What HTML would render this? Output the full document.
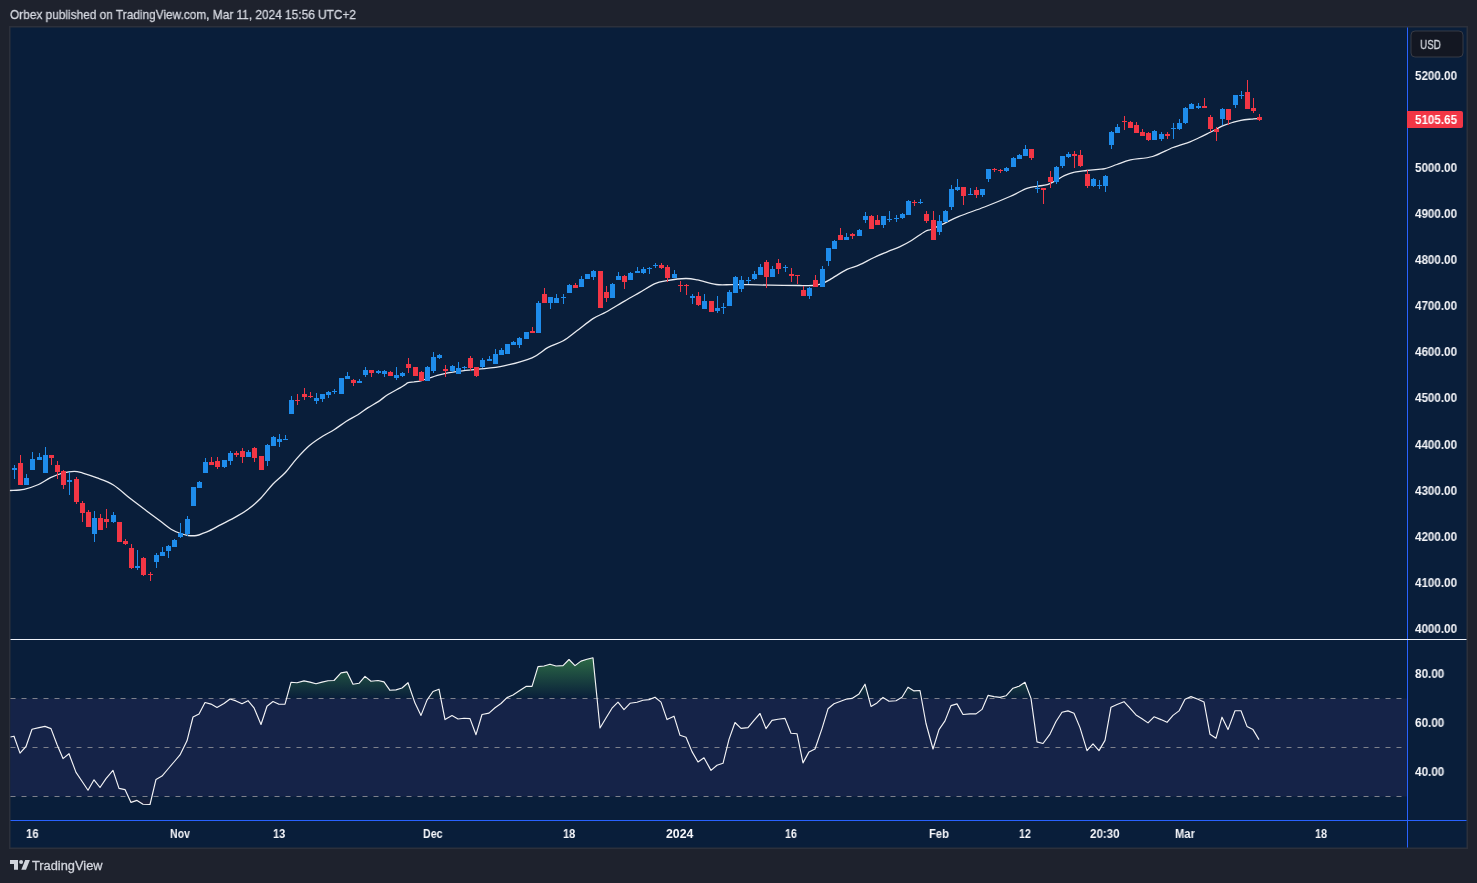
<!DOCTYPE html>
<html><head><meta charset="utf-8"><title>Orbex published on TradingView.com</title>
<style>
html,body{margin:0;padding:0;background:#1e222d;}
body{width:1477px;height:883px;position:relative;overflow:hidden;font-family:"Liberation Sans",sans-serif;}
.t{position:absolute;white-space:nowrap;line-height:20px;height:20px;transform-origin:0 0;will-change:transform;}
</style></head><body>
<svg width="1477" height="883" viewBox="0 0 1477 883" style="position:absolute;left:0;top:0">
<defs><linearGradient id="ob" gradientUnits="userSpaceOnUse" x1="0" y1="625" x2="0" y2="698.5"><stop offset="0" stop-color="#4caf50" stop-opacity="0.95"/><stop offset="1" stop-color="#4caf50" stop-opacity="0"/></linearGradient>
<linearGradient id="os" gradientUnits="userSpaceOnUse" x1="0" y1="796.5" x2="0" y2="870"><stop offset="0" stop-color="#f23645" stop-opacity="0"/><stop offset="1" stop-color="#f23645" stop-opacity="0.95"/></linearGradient>
<clipPath id="cp"><rect x="10.5" y="27.5" width="1396.5" height="820.0"/></clipPath></defs>
<rect x="9.0" y="26.0" width="1459.0" height="823.0" fill="#2c303b"/>
<rect x="10.5" y="27.5" width="1456.0" height="820.0" fill="#091e3a"/>
<rect x="10.5" y="698.5" width="1396.5" height="98" fill="#152348"/>
<clipPath id="obc"><rect x="10.5" y="640" width="1396.5" height="58.5"/></clipPath>
<clipPath id="osc"><rect x="10.5" y="796.5" width="1396.5" height="23"/></clipPath>
<polygon clip-path="url(#obc)" fill="url(#ob)" points="10.5,698.5 10.5,737.0 14.0,736.2 20.0,753.1 26.0,746.5 32.0,729.2 39.0,727.6 45.0,726.4 51.0,728.6 57.0,744.5 63.0,758.6 69.0,753.7 76.0,772.4 82.0,781.2 88.0,790.2 94.0,779.8 100.0,787.5 106.0,778.6 113.0,770.4 119.0,788.4 125.0,789.6 131.0,802.4 137.0,800.4 143.0,804.3 150.0,804.5 156.0,779.4 162.0,776.1 168.0,769.0 174.0,762.0 180.0,754.9 187.0,740.8 193.0,717.0 199.0,714.1 205.0,702.5 211.0,704.1 217.0,707.4 224.0,703.5 230.0,699.0 236.0,700.9 242.0,703.7 248.0,700.7 254.0,707.8 261.0,724.5 267.0,706.2 273.0,701.5 279.0,704.3 285.0,704.1 291.0,682.3 297.0,682.7 304.0,680.9 310.0,682.1 316.0,683.7 322.0,682.1 328.0,680.7 334.0,680.5 341.0,672.9 347.0,671.9 353.0,684.2 359.0,683.3 365.0,676.4 371.0,681.3 378.0,680.5 384.0,681.9 390.0,690.3 396.0,689.9 402.0,688.0 408.0,682.7 415.0,703.1 421.0,715.4 427.0,700.1 433.0,691.5 439.0,689.2 445.0,719.6 452.0,715.6 458.0,719.0 464.0,718.2 470.0,718.6 476.0,734.7 482.0,714.5 489.0,713.1 495.0,707.8 501.0,703.5 507.0,697.6 513.0,695.0 519.0,691.1 526.0,686.4 532.0,686.4 538.0,666.6 544.0,666.0 550.0,664.2 556.0,666.0 563.0,665.6 569.0,659.5 575.0,665.6 581.0,661.1 587.0,659.3 593.0,657.8 600.0,728.0 606.0,718.0 612.0,708.2 618.0,702.1 624.0,709.6 630.0,703.3 637.0,702.3 643.0,700.3 649.0,699.6 655.0,697.2 661.0,702.1 667.0,719.6 674.0,716.2 680.0,735.3 686.0,737.2 692.0,751.6 698.0,762.0 704.0,757.8 711.0,770.4 717.0,765.3 723.0,763.3 729.0,739.4 735.0,722.5 741.0,728.4 748.0,727.6 754.0,720.4 760.0,713.5 766.0,728.6 772.0,720.4 778.0,719.2 785.0,718.4 791.0,733.3 797.0,733.7 803.0,762.9 809.0,751.9 815.0,749.0 822.0,728.6 828.0,708.8 834.0,703.7 840.0,701.5 846.0,699.2 852.0,698.4 859.0,693.9 865.0,684.2 871.0,706.4 877.0,702.9 883.0,697.4 889.0,701.3 896.0,700.7 902.0,697.2 908.0,687.2 914.0,690.9 920.0,690.5 926.0,723.5 933.0,749.0 939.0,729.6 945.0,720.9 951.0,705.6 957.0,703.9 963.0,714.5 970.0,713.9 976.0,713.9 982.0,709.4 988.0,695.4 994.0,696.6 1000.0,697.4 1006.0,695.8 1013.0,688.2 1019.0,686.2 1025.0,682.3 1031.0,698.4 1037.0,741.9 1043.0,743.5 1050.0,734.1 1056.0,721.5 1062.0,712.3 1068.0,710.9 1074.0,713.3 1080.0,727.6 1087.0,750.6 1093.0,743.9 1099.0,750.6 1105.0,740.4 1111.0,707.2 1117.0,704.5 1124.0,701.7 1130.0,708.2 1136.0,714.9 1142.0,718.8 1148.0,722.9 1154.0,716.8 1161.0,719.6 1167.0,722.3 1173.0,715.4 1179.0,710.9 1185.0,699.2 1191.0,696.6 1198.0,699.2 1204.0,701.9 1210.0,734.3 1216.0,738.2 1222.0,717.2 1228.0,729.6 1235.0,710.7 1241.0,710.7 1247.0,726.4 1253.0,729.6 1259.0,739.6 1259.0,698.5"/>
<polygon clip-path="url(#osc)" fill="url(#os)" points="10.5,796.5 10.5,737.0 14.0,736.2 20.0,753.1 26.0,746.5 32.0,729.2 39.0,727.6 45.0,726.4 51.0,728.6 57.0,744.5 63.0,758.6 69.0,753.7 76.0,772.4 82.0,781.2 88.0,790.2 94.0,779.8 100.0,787.5 106.0,778.6 113.0,770.4 119.0,788.4 125.0,789.6 131.0,802.4 137.0,800.4 143.0,804.3 150.0,804.5 156.0,779.4 162.0,776.1 168.0,769.0 174.0,762.0 180.0,754.9 187.0,740.8 193.0,717.0 199.0,714.1 205.0,702.5 211.0,704.1 217.0,707.4 224.0,703.5 230.0,699.0 236.0,700.9 242.0,703.7 248.0,700.7 254.0,707.8 261.0,724.5 267.0,706.2 273.0,701.5 279.0,704.3 285.0,704.1 291.0,682.3 297.0,682.7 304.0,680.9 310.0,682.1 316.0,683.7 322.0,682.1 328.0,680.7 334.0,680.5 341.0,672.9 347.0,671.9 353.0,684.2 359.0,683.3 365.0,676.4 371.0,681.3 378.0,680.5 384.0,681.9 390.0,690.3 396.0,689.9 402.0,688.0 408.0,682.7 415.0,703.1 421.0,715.4 427.0,700.1 433.0,691.5 439.0,689.2 445.0,719.6 452.0,715.6 458.0,719.0 464.0,718.2 470.0,718.6 476.0,734.7 482.0,714.5 489.0,713.1 495.0,707.8 501.0,703.5 507.0,697.6 513.0,695.0 519.0,691.1 526.0,686.4 532.0,686.4 538.0,666.6 544.0,666.0 550.0,664.2 556.0,666.0 563.0,665.6 569.0,659.5 575.0,665.6 581.0,661.1 587.0,659.3 593.0,657.8 600.0,728.0 606.0,718.0 612.0,708.2 618.0,702.1 624.0,709.6 630.0,703.3 637.0,702.3 643.0,700.3 649.0,699.6 655.0,697.2 661.0,702.1 667.0,719.6 674.0,716.2 680.0,735.3 686.0,737.2 692.0,751.6 698.0,762.0 704.0,757.8 711.0,770.4 717.0,765.3 723.0,763.3 729.0,739.4 735.0,722.5 741.0,728.4 748.0,727.6 754.0,720.4 760.0,713.5 766.0,728.6 772.0,720.4 778.0,719.2 785.0,718.4 791.0,733.3 797.0,733.7 803.0,762.9 809.0,751.9 815.0,749.0 822.0,728.6 828.0,708.8 834.0,703.7 840.0,701.5 846.0,699.2 852.0,698.4 859.0,693.9 865.0,684.2 871.0,706.4 877.0,702.9 883.0,697.4 889.0,701.3 896.0,700.7 902.0,697.2 908.0,687.2 914.0,690.9 920.0,690.5 926.0,723.5 933.0,749.0 939.0,729.6 945.0,720.9 951.0,705.6 957.0,703.9 963.0,714.5 970.0,713.9 976.0,713.9 982.0,709.4 988.0,695.4 994.0,696.6 1000.0,697.4 1006.0,695.8 1013.0,688.2 1019.0,686.2 1025.0,682.3 1031.0,698.4 1037.0,741.9 1043.0,743.5 1050.0,734.1 1056.0,721.5 1062.0,712.3 1068.0,710.9 1074.0,713.3 1080.0,727.6 1087.0,750.6 1093.0,743.9 1099.0,750.6 1105.0,740.4 1111.0,707.2 1117.0,704.5 1124.0,701.7 1130.0,708.2 1136.0,714.9 1142.0,718.8 1148.0,722.9 1154.0,716.8 1161.0,719.6 1167.0,722.3 1173.0,715.4 1179.0,710.9 1185.0,699.2 1191.0,696.6 1198.0,699.2 1204.0,701.9 1210.0,734.3 1216.0,738.2 1222.0,717.2 1228.0,729.6 1235.0,710.7 1241.0,710.7 1247.0,726.4 1253.0,729.6 1259.0,739.6 1259.0,796.5"/>
<line x1="10.5" y1="698.5" x2="1407" y2="698.5" stroke="#7d808b" stroke-width="1" stroke-dasharray="5 6"/>
<line x1="10.5" y1="747.5" x2="1407" y2="747.5" stroke="#7d808b" stroke-width="1" stroke-dasharray="5 6"/>
<line x1="10.5" y1="796.5" x2="1407" y2="796.5" stroke="#7d808b" stroke-width="1" stroke-dasharray="5 6"/>
<polyline fill="none" stroke="#f4f4f6" stroke-width="1.15" stroke-linejoin="round" points="10.5,737.0 14.0,736.2 20.0,753.1 26.0,746.5 32.0,729.2 39.0,727.6 45.0,726.4 51.0,728.6 57.0,744.5 63.0,758.6 69.0,753.7 76.0,772.4 82.0,781.2 88.0,790.2 94.0,779.8 100.0,787.5 106.0,778.6 113.0,770.4 119.0,788.4 125.0,789.6 131.0,802.4 137.0,800.4 143.0,804.3 150.0,804.5 156.0,779.4 162.0,776.1 168.0,769.0 174.0,762.0 180.0,754.9 187.0,740.8 193.0,717.0 199.0,714.1 205.0,702.5 211.0,704.1 217.0,707.4 224.0,703.5 230.0,699.0 236.0,700.9 242.0,703.7 248.0,700.7 254.0,707.8 261.0,724.5 267.0,706.2 273.0,701.5 279.0,704.3 285.0,704.1 291.0,682.3 297.0,682.7 304.0,680.9 310.0,682.1 316.0,683.7 322.0,682.1 328.0,680.7 334.0,680.5 341.0,672.9 347.0,671.9 353.0,684.2 359.0,683.3 365.0,676.4 371.0,681.3 378.0,680.5 384.0,681.9 390.0,690.3 396.0,689.9 402.0,688.0 408.0,682.7 415.0,703.1 421.0,715.4 427.0,700.1 433.0,691.5 439.0,689.2 445.0,719.6 452.0,715.6 458.0,719.0 464.0,718.2 470.0,718.6 476.0,734.7 482.0,714.5 489.0,713.1 495.0,707.8 501.0,703.5 507.0,697.6 513.0,695.0 519.0,691.1 526.0,686.4 532.0,686.4 538.0,666.6 544.0,666.0 550.0,664.2 556.0,666.0 563.0,665.6 569.0,659.5 575.0,665.6 581.0,661.1 587.0,659.3 593.0,657.8 600.0,728.0 606.0,718.0 612.0,708.2 618.0,702.1 624.0,709.6 630.0,703.3 637.0,702.3 643.0,700.3 649.0,699.6 655.0,697.2 661.0,702.1 667.0,719.6 674.0,716.2 680.0,735.3 686.0,737.2 692.0,751.6 698.0,762.0 704.0,757.8 711.0,770.4 717.0,765.3 723.0,763.3 729.0,739.4 735.0,722.5 741.0,728.4 748.0,727.6 754.0,720.4 760.0,713.5 766.0,728.6 772.0,720.4 778.0,719.2 785.0,718.4 791.0,733.3 797.0,733.7 803.0,762.9 809.0,751.9 815.0,749.0 822.0,728.6 828.0,708.8 834.0,703.7 840.0,701.5 846.0,699.2 852.0,698.4 859.0,693.9 865.0,684.2 871.0,706.4 877.0,702.9 883.0,697.4 889.0,701.3 896.0,700.7 902.0,697.2 908.0,687.2 914.0,690.9 920.0,690.5 926.0,723.5 933.0,749.0 939.0,729.6 945.0,720.9 951.0,705.6 957.0,703.9 963.0,714.5 970.0,713.9 976.0,713.9 982.0,709.4 988.0,695.4 994.0,696.6 1000.0,697.4 1006.0,695.8 1013.0,688.2 1019.0,686.2 1025.0,682.3 1031.0,698.4 1037.0,741.9 1043.0,743.5 1050.0,734.1 1056.0,721.5 1062.0,712.3 1068.0,710.9 1074.0,713.3 1080.0,727.6 1087.0,750.6 1093.0,743.9 1099.0,750.6 1105.0,740.4 1111.0,707.2 1117.0,704.5 1124.0,701.7 1130.0,708.2 1136.0,714.9 1142.0,718.8 1148.0,722.9 1154.0,716.8 1161.0,719.6 1167.0,722.3 1173.0,715.4 1179.0,710.9 1185.0,699.2 1191.0,696.6 1198.0,699.2 1204.0,701.9 1210.0,734.3 1216.0,738.2 1222.0,717.2 1228.0,729.6 1235.0,710.7 1241.0,710.7 1247.0,726.4 1253.0,729.6 1259.0,739.6"/>
<path fill="none" stroke="#e8eaef" stroke-width="1.3" stroke-linejoin="round" stroke-linecap="round" d="M10.5 490.5C12.8 490.3 19.4 490.3 24.1 489.3C28.8 488.3 34.2 486.4 38.6 484.5C43.0 482.6 46.5 479.6 50.5 477.7C54.5 475.8 58.4 474.2 62.4 473.1C66.4 472.1 70.9 471.4 74.3 471.4C77.7 471.4 79.1 472.1 82.8 473.1C86.5 474.2 91.3 475.7 96.4 477.7C101.5 479.7 107.8 481.5 113.4 485.0C119.1 488.5 124.7 494.2 130.3 498.6C136.0 503.0 142.2 507.6 147.3 511.4C152.4 515.2 156.9 518.6 160.9 521.6C164.9 524.6 167.8 527.2 171.1 529.2C174.4 531.2 177.7 532.5 180.5 533.5C183.3 534.5 185.4 535.2 188.1 535.5C190.8 535.8 194.0 535.9 196.6 535.5C199.2 535.1 201.5 533.8 203.4 533.1C205.3 532.4 205.1 532.8 208.0 531.4C210.9 530.0 216.4 527.0 221.0 524.6C225.6 522.2 231.3 519.5 235.8 516.9C240.3 514.3 243.9 512.4 248.1 509.2C252.3 506.1 256.9 502.2 261.0 498.0C265.1 493.8 269.0 488.2 273.0 484.0C277.0 479.8 280.9 477.2 284.9 473.0C288.8 468.8 292.6 463.2 296.7 458.6C300.8 454.0 305.2 449.2 309.5 445.5C313.8 441.8 318.1 439.1 322.2 436.5C326.3 433.9 330.1 432.2 334.1 429.7C338.1 427.2 342.0 424.0 346.0 421.5C350.0 419.0 354.2 417.0 357.9 414.7C361.6 412.4 364.7 409.8 368.1 407.6C371.5 405.4 375.0 403.8 378.3 401.6C381.6 399.4 384.4 396.8 388.0 394.5C391.6 392.2 397.2 389.5 400.0 387.9C402.8 386.3 403.1 386.0 404.5 385.1C405.9 384.2 406.6 383.2 408.2 382.7C409.8 382.2 411.8 382.2 414.0 381.9C416.2 381.5 417.3 381.8 421.5 380.6C425.7 379.4 433.3 376.3 439.4 374.8C445.5 373.3 451.5 372.3 458.0 371.4C464.5 370.5 470.9 370.1 478.5 369.2C486.1 368.3 495.0 367.7 503.9 365.8C512.8 363.9 524.6 360.9 532.0 357.8C539.4 354.7 542.9 350.2 548.1 347.4C553.3 344.5 558.5 343.5 563.3 340.7C568.1 337.9 571.9 334.5 576.9 330.8C581.9 327.1 588.0 321.8 593.0 318.6C598.0 315.4 601.4 314.7 606.6 311.8C611.9 308.9 619.0 304.3 624.5 301.1C630.0 297.9 634.7 295.3 639.8 292.4C644.9 289.5 650.5 285.6 655.0 283.6C659.5 281.7 661.8 281.6 666.9 280.7C672.0 279.8 680.5 278.6 685.6 278.5C690.7 278.4 692.4 278.9 697.5 279.9C702.6 280.9 710.5 283.7 716.2 284.5C721.9 285.3 726.2 284.6 731.5 284.6C736.8 284.6 741.5 284.5 748.0 284.6C754.5 284.7 761.9 285.1 770.5 285.2C779.1 285.3 792.3 285.4 799.4 285.5C806.5 285.6 809.5 285.7 813.0 285.5C816.5 285.3 817.8 285.2 820.6 284.2C823.4 283.2 825.6 282.1 830.0 279.6C834.4 277.1 842.2 271.8 847.0 269.4C851.8 267.0 854.3 267.2 858.8 265.2C863.3 263.2 869.3 259.8 874.1 257.5C878.9 255.2 883.5 253.4 887.7 251.6C892.0 249.8 895.6 248.7 899.6 246.8C903.6 245.0 907.3 243.1 911.5 240.5C915.7 237.9 921.8 233.3 925.0 231.5C928.2 229.7 928.1 230.7 930.9 229.5C933.7 228.3 937.3 226.6 942.0 224.4C946.7 222.2 951.9 219.3 959.0 216.4C966.1 213.5 976.0 210.3 984.5 207.0C993.0 203.7 1002.9 199.6 1010.0 196.5C1017.1 193.4 1022.4 190.1 1026.9 188.4C1031.4 186.7 1033.7 186.9 1037.1 186.3C1040.5 185.7 1044.2 185.5 1047.3 184.6C1050.4 183.7 1053.0 182.2 1055.8 180.7C1058.6 179.2 1061.2 177.0 1064.3 175.6C1067.4 174.2 1070.8 173.0 1074.5 172.2C1078.2 171.3 1082.4 171.0 1086.4 170.5C1090.4 170.0 1095.2 169.6 1098.3 169.3C1101.4 169.0 1101.9 169.5 1105.0 168.7C1108.1 167.9 1112.7 166.0 1116.9 164.5C1121.2 163.0 1124.5 161.2 1130.5 159.9C1136.5 158.6 1145.5 158.6 1152.6 156.5C1159.7 154.4 1166.8 149.9 1173.0 147.5C1179.2 145.1 1185.8 143.4 1190.0 141.8C1194.2 140.2 1195.7 139.3 1198.5 138.0C1201.3 136.7 1204.5 135.2 1207.0 133.9C1209.5 132.7 1210.9 131.9 1213.7 130.5C1216.5 129.1 1220.8 126.7 1223.9 125.4C1227.0 124.1 1229.6 123.3 1232.4 122.5C1235.2 121.7 1237.8 120.9 1240.9 120.3C1244.0 119.7 1248.0 119.4 1251.1 119.1C1254.2 118.8 1258.1 118.4 1259.5 118.3"/>
<path shape-rendering="crispEdges" fill="#1e8ceb" d="M14 465h1v14h-1zM12 468h5v2h-5zM26 474h1v11h-1zM24 478h5v7h-5zM32 452h1v18h-1zM30 459h5v11h-5zM39 453h1v7h-1zM37 457h5v3h-5zM45 447h1v26h-1zM43 455h5v18h-5zM69 472h1v23h-1zM67 480h5v2h-5zM94 511h1v31h-1zM92 518h5v16h-5zM113 512h1v11h-1zM111 515h5v7h-5zM137 550h1v20h-1zM135 566h5v2h-5zM156 553h1v15h-1zM154 555h5v7h-5zM162 547h1v9h-1zM160 552h5v4h-5zM168 545h1v13h-1zM166 546h5v5h-5zM174 539h1v8h-1zM172 540h5v7h-5zM180 523h1v15h-1zM178 533h5v4h-5zM187 516h1v20h-1zM185 519h5v15h-5zM193 487h1v19h-1zM191 487h5v19h-5zM199 481h1v7h-1zM197 482h5v6h-5zM205 458h1v15h-1zM203 462h5v11h-5zM224 460h1v8h-1zM222 460h5v7h-5zM230 451h1v14h-1zM228 453h5v8h-5zM248 450h1v7h-1zM246 452h5v5h-5zM267 444h1v22h-1zM265 445h5v16h-5zM273 436h1v10h-1zM271 437h5v9h-5zM279 434h1v13h-1zM277 439h5v3h-5zM285 435h1v5h-1zM283 439h5v1h-5zM291 396h1v18h-1zM289 400h5v14h-5zM316 393h1v11h-1zM314 398h5v3h-5zM322 394h1v8h-1zM320 394h5v5h-5zM328 391h1v7h-1zM326 392h5v3h-5zM334 389h1v5h-1zM332 391h5v1h-5zM341 378h1v16h-1zM339 378h5v16h-5zM347 372h1v7h-1zM345 376h5v3h-5zM359 379h1v4h-1zM357 381h5v2h-5zM365 367h1v10h-1zM363 370h5v5h-5zM378 370h1v4h-1zM376 371h5v2h-5zM384 370h1v7h-1zM382 371h5v3h-5zM396 367h1v13h-1zM394 375h5v3h-5zM402 372h1v5h-1zM400 373h5v3h-5zM427 366h1v15h-1zM425 367h5v14h-5zM433 352h1v21h-1zM431 357h5v14h-5zM439 354h1v5h-1zM437 355h5v3h-5zM452 365h1v7h-1zM450 366h5v5h-5zM458 362h1v12h-1zM456 368h5v6h-5zM464 366h1v4h-1zM462 367h5v1h-5zM482 358h1v10h-1zM480 360h5v7h-5zM489 356h1v5h-1zM487 359h5v2h-5zM495 349h1v15h-1zM493 354h5v10h-5zM501 348h1v7h-1zM499 350h5v5h-5zM507 344h1v10h-1zM505 344h5v10h-5zM513 341h1v4h-1zM511 342h5v3h-5zM519 337h1v11h-1zM517 338h5v7h-5zM526 332h1v7h-1zM524 332h5v7h-5zM538 301h1v32h-1zM536 303h5v30h-5zM550 297h1v12h-1zM548 297h5v6h-5zM556 294h1v9h-1zM554 298h5v5h-5zM563 294h1v10h-1zM561 297h5v1h-5zM569 284h1v9h-1zM567 285h5v8h-5zM581 276h1v11h-1zM579 279h5v8h-5zM587 274h1v5h-1zM585 274h5v5h-5zM593 270h1v10h-1zM591 271h5v6h-5zM612 283h1v15h-1zM610 284h5v14h-5zM618 272h1v8h-1zM616 276h5v4h-5zM630 272h1v8h-1zM628 273h5v7h-5zM637 267h1v6h-1zM635 271h5v2h-5zM643 267h1v7h-1zM641 269h5v4h-5zM649 267h1v7h-1zM647 268h5v1h-5zM655 263h1v5h-1zM653 265h5v1h-5zM674 270h1v8h-1zM672 274h5v4h-5zM692 294h1v10h-1zM690 296h5v2h-5zM704 294h1v15h-1zM702 301h5v8h-5zM717 296h1v17h-1zM715 308h5v3h-5zM723 303h1v11h-1zM721 307h5v1h-5zM729 290h1v16h-1zM727 292h5v14h-5zM735 276h1v17h-1zM733 277h5v16h-5zM741 276h1v16h-1zM739 280h5v9h-5zM748 277h1v7h-1zM746 280h5v1h-5zM754 271h1v9h-1zM752 274h5v5h-5zM760 264h1v11h-1zM758 267h5v8h-5zM772 266h1v11h-1zM770 269h5v8h-5zM785 265h1v7h-1zM783 267h5v1h-5zM809 287h1v12h-1zM807 288h5v8h-5zM822 266h1v21h-1zM820 269h5v18h-5zM828 248h1v18h-1zM826 248h5v13h-5zM834 240h1v9h-1zM832 241h5v8h-5zM846 233h1v7h-1zM844 237h5v3h-5zM859 229h1v7h-1zM857 230h5v6h-5zM865 212h1v11h-1zM863 216h5v4h-5zM883 216h1v12h-1zM881 216h5v9h-5zM889 211h1v11h-1zM887 219h5v1h-5zM896 215h1v7h-1zM894 218h5v1h-5zM902 213h1v6h-1zM900 214h5v4h-5zM908 200h1v15h-1zM906 201h5v14h-5zM920 199h1v5h-1zM918 202h5v1h-5zM939 215h1v20h-1zM937 221h5v11h-5zM945 210h1v12h-1zM943 211h5v11h-5zM951 185h1v25h-1zM949 189h5v18h-5zM957 179h1v12h-1zM955 187h5v3h-5zM970 188h1v7h-1zM968 194h5v1h-5zM982 189h1v8h-1zM980 189h5v6h-5zM988 169h1v13h-1zM986 169h5v10h-5zM1006 167h1v5h-1zM1004 168h5v3h-5zM1013 157h1v10h-1zM1011 158h5v9h-5zM1019 154h1v5h-1zM1017 155h5v4h-5zM1025 145h1v11h-1zM1023 149h5v7h-5zM1037 181h1v12h-1zM1035 188h5v1h-5zM1056 166h1v18h-1zM1054 167h5v15h-5zM1062 156h1v12h-1zM1060 156h5v10h-5zM1068 152h1v6h-1zM1066 154h5v3h-5zM1093 178h1v9h-1zM1091 179h5v7h-5zM1099 180h1v9h-1zM1097 185h5v1h-5zM1105 175h1v17h-1zM1103 176h5v10h-5zM1111 131h1v18h-1zM1109 132h5v13h-5zM1117 124h1v9h-1zM1115 127h5v6h-5zM1154 130h1v10h-1zM1152 131h5v9h-5zM1161 132h1v9h-1zM1159 134h5v5h-5zM1173 123h1v16h-1zM1171 128h5v1h-5zM1179 119h1v11h-1zM1177 123h5v6h-5zM1185 107h1v17h-1zM1183 108h5v15h-5zM1191 103h1v6h-1zM1189 104h5v5h-5zM1198 103h1v6h-1zM1196 106h5v2h-5zM1222 108h1v17h-1zM1220 109h5v10h-5zM1235 95h1v13h-1zM1233 95h5v10h-5zM1241 91h1v8h-1zM1239 95h5v1h-5z"/>
<path shape-rendering="crispEdges" fill="#f23645" d="M20 455h1v30h-1zM18 463h5v22h-5zM51 455h1v10h-1zM49 455h5v3h-5zM57 461h1v18h-1zM55 465h5v7h-5zM63 470h1v19h-1zM61 471h5v14h-5zM76 477h1v27h-1zM74 479h5v23h-5zM82 501h1v21h-1zM80 503h5v10h-5zM88 510h1v17h-1zM86 512h5v15h-5zM100 514h1v16h-1zM98 518h5v12h-5zM106 509h1v19h-1zM104 519h5v3h-5zM119 522h1v20h-1zM117 522h5v20h-5zM125 539h1v6h-1zM123 541h5v3h-5zM131 544h1v25h-1zM129 548h5v20h-5zM143 557h1v19h-1zM141 558h5v17h-5zM150 572h1v9h-1zM148 574h5v1h-5zM211 457h1v8h-1zM209 462h5v3h-5zM217 457h1v12h-1zM215 461h5v6h-5zM236 451h1v6h-1zM234 453h5v2h-5zM242 448h1v15h-1zM240 451h5v6h-5zM254 447h1v15h-1zM252 448h5v10h-5zM261 456h1v14h-1zM259 456h5v14h-5zM297 394h1v11h-1zM295 400h5v1h-5zM304 388h1v12h-1zM302 394h5v3h-5zM310 392h1v6h-1zM308 396h5v1h-5zM353 379h1v7h-1zM351 380h5v3h-5zM371 370h1v7h-1zM369 370h5v3h-5zM390 371h1v5h-1zM388 372h5v4h-5zM408 358h1v15h-1zM406 364h5v4h-5zM415 367h1v9h-1zM413 367h5v9h-5zM421 371h1v10h-1zM419 372h5v9h-5zM445 365h1v12h-1zM443 369h5v2h-5zM470 356h1v15h-1zM468 358h5v10h-5zM476 367h1v10h-1zM474 367h5v9h-5zM532 327h1v6h-1zM530 331h5v2h-5zM544 288h1v15h-1zM542 294h5v9h-5zM575 283h1v5h-1zM573 285h5v3h-5zM600 271h1v37h-1zM598 271h5v37h-5zM606 286h1v16h-1zM604 292h5v6h-5zM624 275h1v14h-1zM622 276h5v6h-5zM661 263h1v6h-1zM659 265h5v3h-5zM667 265h1v17h-1zM665 267h5v11h-5zM680 281h1v11h-1zM678 285h5v1h-5zM686 284h1v11h-1zM684 285h5v1h-5zM698 292h1v14h-1zM696 296h5v9h-5zM711 301h1v11h-1zM709 301h5v11h-5zM766 260h1v28h-1zM764 262h5v15h-5zM778 259h1v15h-1zM776 263h5v6h-5zM791 268h1v14h-1zM789 274h5v2h-5zM797 275h1v9h-1zM795 275h5v1h-5zM803 286h1v10h-1zM801 290h5v6h-5zM815 275h1v12h-1zM813 280h5v7h-5zM840 228h1v12h-1zM838 235h5v5h-5zM852 233h1v6h-1zM850 234h5v2h-5zM871 215h1v14h-1zM869 216h5v13h-5zM877 215h1v10h-1zM875 220h5v5h-5zM914 200h1v6h-1zM912 202h5v1h-5zM926 211h1v12h-1zM924 214h5v7h-5zM933 211h1v29h-1zM931 220h5v20h-5zM963 187h1v18h-1zM961 187h5v9h-5zM976 187h1v11h-1zM974 190h5v5h-5zM994 168h1v4h-1zM992 169h5v1h-5zM1000 169h1v4h-1zM998 170h5v1h-5zM1031 149h1v11h-1zM1029 149h5v9h-5zM1043 188h1v16h-1zM1041 188h5v2h-5zM1050 171h1v17h-1zM1048 177h5v5h-5zM1074 151h1v17h-1zM1072 154h5v2h-5zM1080 150h1v17h-1zM1078 155h5v11h-5zM1087 170h1v18h-1zM1085 174h5v12h-5zM1124 116h1v14h-1zM1122 121h5v1h-5zM1130 121h1v7h-1zM1128 122h5v6h-5zM1136 122h1v11h-1zM1134 125h5v8h-5zM1142 129h1v7h-1zM1140 132h5v4h-5zM1148 132h1v9h-1zM1146 133h5v7h-5zM1167 132h1v7h-1zM1165 134h5v2h-5zM1204 98h1v10h-1zM1202 106h5v2h-5zM1210 115h1v17h-1zM1208 117h5v12h-5zM1216 127h1v14h-1zM1214 129h5v3h-5zM1228 109h1v16h-1zM1226 109h5v11h-5zM1247 80h1v29h-1zM1245 92h5v17h-5zM1253 98h1v15h-1zM1251 108h5v3h-5zM1259 114h1v7h-1zM1257 117h5v3h-5z"/>
<rect x="1407" y="27.5" width="1" height="820.0" fill="#2962ff"/>
<rect x="10.5" y="820" width="1456.0" height="1" fill="#2962ff"/>
<rect x="10.5" y="639" width="1456.0" height="1" fill="#f0f3fa"/>
<rect x="1411" y="31" width="52" height="26" rx="4" fill="#131722" stroke="#363a45" stroke-width="1"/>
<path d="M1407 111h54a2 2 0 0 1 2 2v13a2 2 0 0 1 -2 2h-54z" fill="#f23645"/>
<g fill="#d1d4dc" transform="translate(10,860)"><path d="M0 0h8v9.8h-4v-5.8h-4z"/><circle cx="11.1" cy="2.1" r="2"/><path d="M15.2 0h4.7l-3.9 9.8h-4.7z"/></g>
</svg>
<div class="t" style="left:10.05px;top:4.60px;font-size:13px;font-weight:normal;color:#d5d8e0;transform:scaleX(0.9122);-webkit-text-stroke:0.3px #d5d8e0;">Orbex published on TradingView.com, Mar 11, 2024 15:56 UTC+2</div>
<div class="t" style="left:1420.00px;top:34.60px;font-size:12.7px;font-weight:normal;color:#d1d4dc;transform:scaleX(0.7814);-webkit-text-stroke:0.35px #d1d4dc;">USD</div>
<div class="t" style="left:1415.00px;top:618.84px;font-size:12px;font-weight:bold;color:#f5f6fa;transform:scaleX(0.9683);">4000.00</div>
<div class="t" style="left:1415.00px;top:572.74px;font-size:12px;font-weight:bold;color:#f5f6fa;transform:scaleX(0.9683);">4100.00</div>
<div class="t" style="left:1415.00px;top:526.64px;font-size:12px;font-weight:bold;color:#f5f6fa;transform:scaleX(0.9683);">4200.00</div>
<div class="t" style="left:1415.00px;top:480.54px;font-size:12px;font-weight:bold;color:#f5f6fa;transform:scaleX(0.9683);">4300.00</div>
<div class="t" style="left:1415.00px;top:435.04px;font-size:12px;font-weight:bold;color:#f5f6fa;transform:scaleX(0.9683);">4400.00</div>
<div class="t" style="left:1415.00px;top:388.34px;font-size:12px;font-weight:bold;color:#f5f6fa;transform:scaleX(0.9683);">4500.00</div>
<div class="t" style="left:1415.00px;top:342.24px;font-size:12px;font-weight:bold;color:#f5f6fa;transform:scaleX(0.9683);">4600.00</div>
<div class="t" style="left:1415.00px;top:296.14px;font-size:12px;font-weight:bold;color:#f5f6fa;transform:scaleX(0.9683);">4700.00</div>
<div class="t" style="left:1415.00px;top:250.04px;font-size:12px;font-weight:bold;color:#f5f6fa;transform:scaleX(0.9683);">4800.00</div>
<div class="t" style="left:1415.00px;top:203.94px;font-size:12px;font-weight:bold;color:#f5f6fa;transform:scaleX(0.9683);">4900.00</div>
<div class="t" style="left:1415.00px;top:157.84px;font-size:12px;font-weight:bold;color:#f5f6fa;transform:scaleX(0.9683);">5000.00</div>
<div class="t" style="left:1415.00px;top:65.64px;font-size:12px;font-weight:bold;color:#f5f6fa;transform:scaleX(0.9683);">5200.00</div>
<div class="t" style="left:1415.00px;top:109.64px;font-size:12px;font-weight:bold;color:#ffffff;transform:scaleX(0.9683);">5105.65</div>
<div class="t" style="left:1415.00px;top:663.74px;font-size:12px;font-weight:bold;color:#f5f6fa;transform:scaleX(0.9767);">80.00</div>
<div class="t" style="left:1415.00px;top:712.94px;font-size:12px;font-weight:bold;color:#f5f6fa;transform:scaleX(0.9767);">60.00</div>
<div class="t" style="left:1415.00px;top:762.04px;font-size:12px;font-weight:bold;color:#f5f6fa;transform:scaleX(0.9767);">40.00</div>
<div class="t" style="left:26.20px;top:823.94px;font-size:12px;font-weight:bold;color:#f5f6fa;transform:scaleX(0.9421);">16</div>
<div class="t" style="left:170.40px;top:823.94px;font-size:12px;font-weight:bold;color:#f5f6fa;transform:scaleX(0.8796);">Nov</div>
<div class="t" style="left:273.00px;top:823.94px;font-size:12px;font-weight:bold;color:#f5f6fa;transform:scaleX(0.9121);">13</div>
<div class="t" style="left:423.40px;top:823.94px;font-size:12px;font-weight:bold;color:#f5f6fa;transform:scaleX(0.8864);">Dec</div>
<div class="t" style="left:562.70px;top:823.94px;font-size:12px;font-weight:bold;color:#f5f6fa;transform:scaleX(0.9121);">18</div>
<div class="t" style="left:666.30px;top:823.94px;font-size:12px;font-weight:bold;color:#f5f6fa;transform:scaleX(1.0280);">2024</div>
<div class="t" style="left:785.00px;top:823.94px;font-size:12px;font-weight:bold;color:#f5f6fa;transform:scaleX(0.8822);">16</div>
<div class="t" style="left:928.80px;top:823.94px;font-size:12px;font-weight:bold;color:#f5f6fa;transform:scaleX(0.9357);">Feb</div>
<div class="t" style="left:1019.20px;top:823.94px;font-size:12px;font-weight:bold;color:#f5f6fa;transform:scaleX(0.8822);">12</div>
<div class="t" style="left:1090.30px;top:823.94px;font-size:12px;font-weight:bold;color:#f5f6fa;transform:scaleX(0.9659);">20:30</div>
<div class="t" style="left:1175.00px;top:823.94px;font-size:12px;font-weight:bold;color:#f5f6fa;transform:scaleX(0.9310);">Mar</div>
<div class="t" style="left:1315.20px;top:823.94px;font-size:12px;font-weight:bold;color:#f5f6fa;transform:scaleX(0.8972);">18</div>
<div class="t" style="left:32.40px;top:855.84px;font-size:12.3px;font-weight:normal;color:#d1d4dc;transform:scaleX(1.0421);-webkit-text-stroke:0.3px #d1d4dc;">TradingView</div>
</body></html>
